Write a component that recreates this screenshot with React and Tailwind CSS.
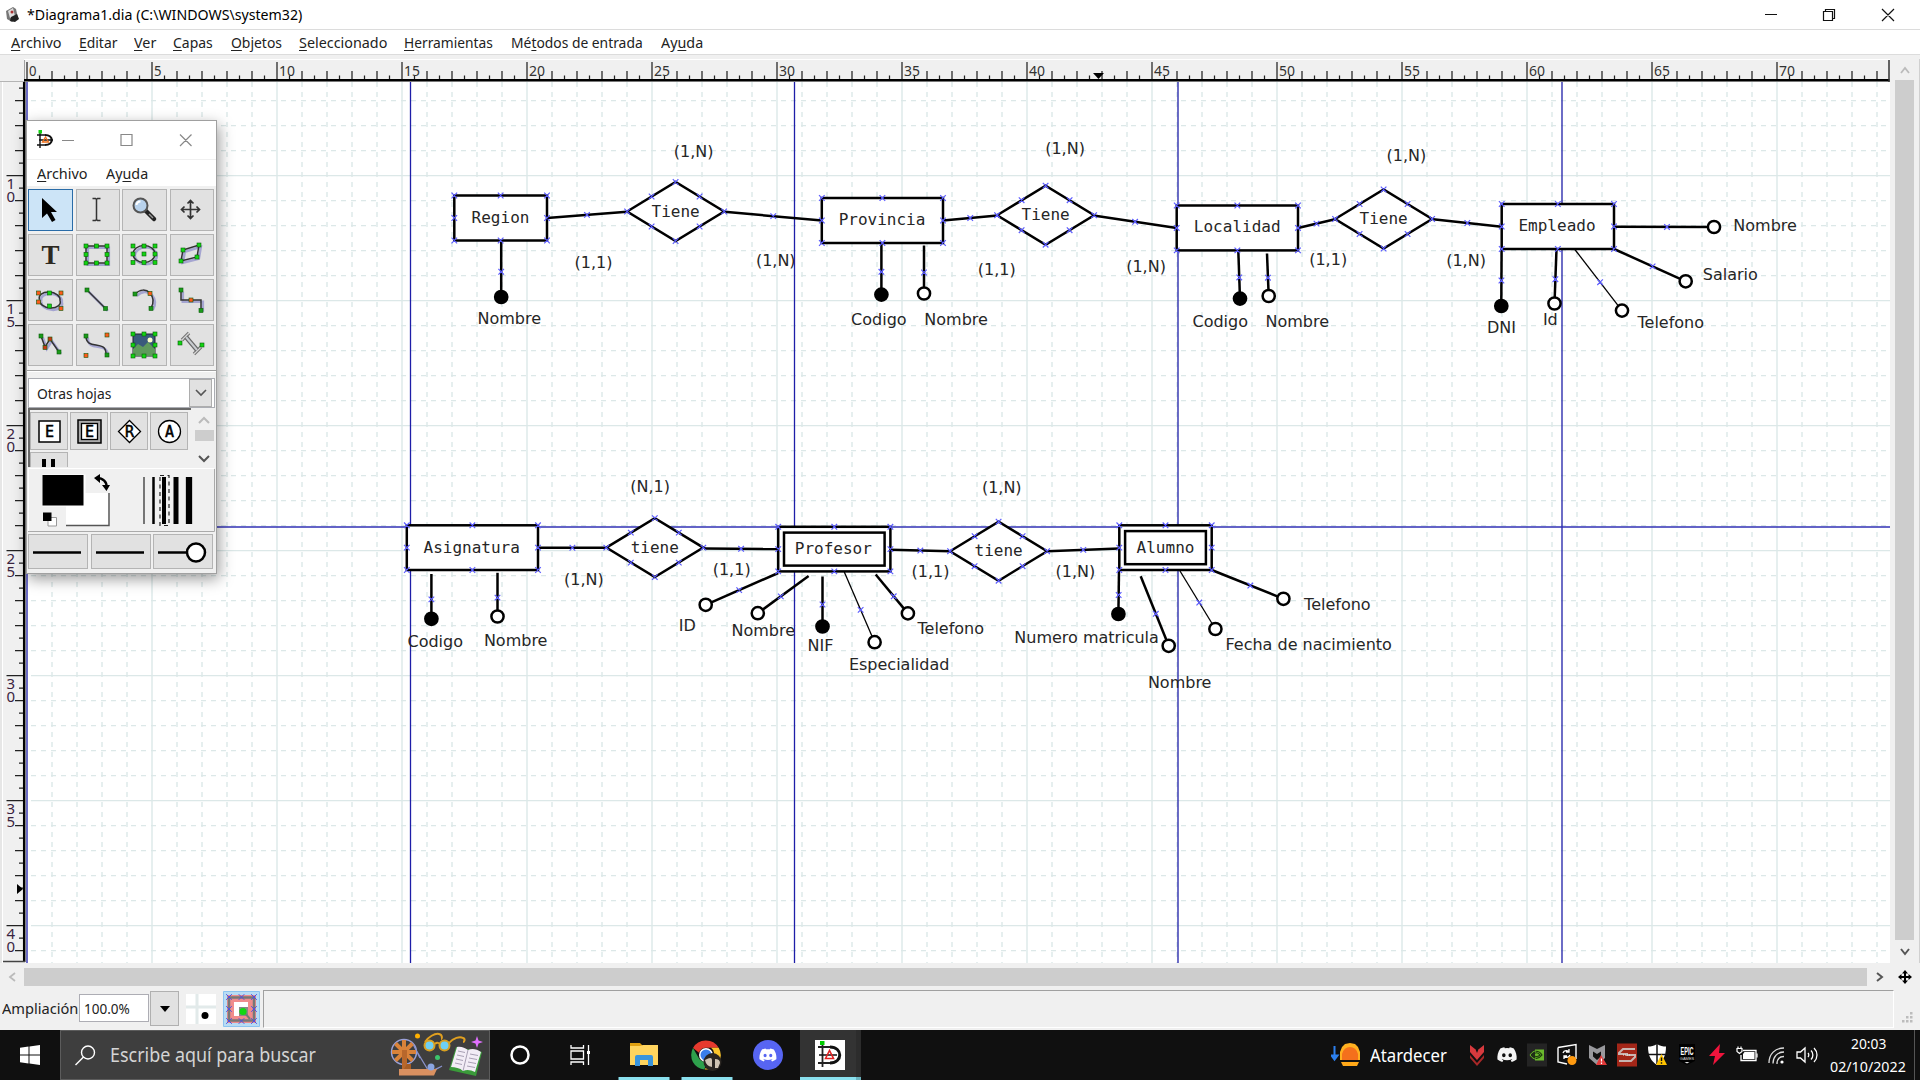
import React, { useLayoutEffect, useRef, useState } from "react";

/* Text squeezed or stretched to a given width */
function Fit({ w, className = "", children }) {
  const ref = useRef(null);
  const [scale, setScale] = useState(1);
  useLayoutEffect(() => {
    setScale(w / ref.current.offsetWidth);
  }, [w]);
  return (
    <span className={"inline-block shrink-0 whitespace-nowrap " + className} style={{ width: w }}>
      <span ref={ref} className="inline-block origin-left" style={{ transform: `scaleX(${scale})` }}>
        {children}
      </span>
    </span>
  );
}

const U = ({ children }) => <span className="underline decoration-1 underline-offset-2">{children}</span>;

const MENUS = [
  [["", "A", "rchivo"], 51, 17],
  [["", "E", "ditar"], 38, 17],
  [["", "V", "er"], 22, 17],
  [["", "C", "apas"], 40, 18],
  [["", "O", "bjetos"], 51, 17],
  [["", "S", "eleccionado"], 88, 17],
  [["", "H", "erramientas"], 89, 18],
  [["Mé", "t", "odos de entrada"], 132, 18],
  [["Ay", "u", "da"], 42, 0],
];

/* ---------- diagram data ---------- */
const ENTITIES = [
  { t: "Region", x: 454.3, y: 195.5, r: 547, b: 240.5, c: 500.5, base: 223 },
  { t: "Provincia", x: 821.8, y: 198, r: 943, b: 243, c: 882, base: 225 },
  { t: "Localidad", x: 1176.7, y: 205.5, r: 1298, b: 250.4, c: 1237.2, base: 232 },
  { t: "Empleado", x: 1501.7, y: 204, r: 1614, b: 249, c: 1557, base: 231.3 },
  { t: "Asignatura", x: 406.8, y: 525.3, r: 538, b: 570, c: 471.7, base: 552.7 },
  { t: "Profesor", x: 778.2, y: 526.8, r: 890.4, b: 571.4, c: 833.3, base: 553.6, weak: true },
  { t: "Alumno", x: 1119.3, y: 525.3, r: 1211.7, b: 570, c: 1165.5, base: 552.6, weak: true },
];
const RELATIONS = [
  { t: "Tiene", c: 675.6, y: 211.5 },
  { t: "Tiene", c: 1045.6, y: 215.2 },
  { t: "Tiene", c: 1383.6, y: 219 },
  { t: "tiene", c: 654.8, y: 547.6 },
  { t: "tiene", c: 998.6, y: 551.2 },
];
const LINKS = [
  [547, 218, 627, 211.8],
  [724.5, 211.8, 822, 220.5],
  [943, 220.5, 997.5, 215.6],
  [1093.5, 215.6, 1176.7, 228],
  [1298, 228, 1335, 219.2],
  [1433, 219.2, 1501.7, 226.8],
  [538, 547.7, 606.8, 547.8],
  [704, 548.6, 778.2, 549],
  [890.4, 549.8, 950.3, 551.3],
  [1047.3, 551.2, 1119.3, 548.5],
];
/* x1, y1, cx, cy, filled, thin */
const PINS = [
  [501.2, 240.5, 501.2, 297, 1, 0],
  [881.4, 243, 881.4, 294.6, 1, 0],
  [924, 245.5, 924, 293.5, 0, 0],
  [1238.3, 250.4, 1240, 298.6, 1, 0],
  [1267, 253.5, 1268.7, 296, 0, 0],
  [1501.6, 249, 1501.3, 306, 1, 0],
  [1556.5, 249, 1554.5, 303.5, 0, 0],
  [1574.5, 249, 1622, 310.6, 0, 1],
  [1614, 249, 1685.7, 281.3, 0, 0],
  [1614, 226.8, 1714, 227, 0, 0],
  [431.4, 574, 431.4, 618.8, 1, 0],
  [497.5, 572.8, 497.5, 616.5, 0, 0],
  [778.2, 573, 705.7, 604.8, 0, 0],
  [808.6, 576, 757.8, 613.2, 0, 0],
  [822.5, 576.5, 822.5, 626.5, 1, 0],
  [844.3, 572, 874.6, 642.2, 0, 1],
  [875.7, 574.5, 907.9, 613.4, 0, 0],
  [1119, 570, 1118.4, 614, 1, 0],
  [1140.7, 576.3, 1168.7, 645.8, 0, 0],
  [1180, 571, 1215.4, 629, 0, 1],
  [1211.7, 570, 1283.4, 598.8, 0, 0],
];
const LABELS = [
  ["(1,N)", 674.3, 157.3], ["(1,1)", 575, 268.4], ["(1,N)", 756.4, 266.2],
  ["Nombre", 478, 323.7], ["Codigo", 851.6, 325], ["Nombre", 924.8, 325],
  ["(1,N)", 1045.7, 154], ["(1,1)", 978.3, 275], ["(1,N)", 1126.7, 272.4],
  ["(1,1)", 1309.7, 265], ["(1,N)", 1387, 161.3], ["Codigo", 1193, 327.4],
  ["Nombre", 1266, 327.4], ["(1,N)", 1446.7, 266.2], ["DNI", 1487.4, 333.4],
  ["Id", 1543.4, 325], ["Telefono", 1638, 328.4], ["Salario", 1703.3, 280],
  ["Nombre", 1733.8, 231.2], ["(N,1)", 630.8, 492.4], ["(1,N)", 564.6, 584.8],
  ["(1,1)", 713.2, 575], ["(1,1)", 912.1, 577.4], ["(1,N)", 982.4, 493.2],
  ["(1,N)", 1056, 577.4], ["Codigo", 408, 647.4], ["Nombre", 484.4, 646.3],
  ["ID", 679.3, 631.3], ["Nombre", 732, 636.4], ["NIF", 808, 651.4],
  ["Especialidad", 849.4, 670], ["Telefono", 918, 633.6], ["Numero matricula", 1014.8, 642.6],
  ["Nombre", 1148.4, 687.6], ["Fecha de nacimiento", 1226, 650], ["Telefono", 1304.6, 609.8],
];

const cross = (x, y) => `M${x - 2.8} ${y - 2.8}l5.6 5.6M${x + 2.8} ${y - 2.8}l-5.6 5.6`;
const marks = [];
ENTITIES.forEach((e) => {
  const mx = (e.x + e.r) / 2;
  const my = (e.y + e.b) / 2;
  [[e.x, e.y], [mx, e.y], [e.r, e.y], [e.x, my], [e.r, my], [e.x, e.b], [mx, e.b], [e.r, e.b]].forEach((p) => marks.push(cross(p[0], p[1])));
});
RELATIONS.forEach((d) => {
  [[-48.5, 0], [48.5, 0], [0, -29.5], [0, 29.5], [-24, -15], [24, -15], [-24, 15], [24, 15]].forEach((p) => marks.push(cross(d.c + p[0], d.y + p[1])));
});
LINKS.forEach((l) => marks.push(cross((l[0] + l[2]) / 2, (l[1] + l[3]) / 2)));
PINS.forEach((p) => {
  const len = Math.hypot(p[2] - p[0], p[3] - p[1]);
  const k = (len + 6) / (2 * len);
  marks.push(cross(p[0] + (p[2] - p[0]) * k, p[1] + (p[3] - p[1]) * k));
});

const range = (a, b) => Array.from({ length: b - a + 1 }, (_, i) => a + i);

function Diagram() {
  return (
    <svg className="block" width="1864" height="881" viewBox="26 82 1864 881">
      <rect x="26" y="82" width="1864" height="881" fill="#fff" />
      {range(1, 74).map((i) => (
        <line key={i} x1={27 + i * 25} x2={27 + i * 25} y1="82" y2="963" stroke="#dce8e8" strokeWidth="1.4" strokeDasharray={i % 5 ? "5 5" : "none"} />
      ))}
      {range(1, 35).map((i) => (
        <line key={i} x1="31" x2="1890" y1={75.6 + i * 25} y2={75.6 + i * 25} stroke="#dce8e8" strokeWidth="1.4" strokeDasharray={(i + 1) % 5 ? "5 5" : "none"} />
      ))}
      {[27, 410.5, 794.5, 1178, 1562].map((x) => (
        <line key={x} x1={x} x2={x} y1="82" y2="963" stroke="#1e1ea8" strokeWidth="1.3" />
      ))}
      <line x1="26" x2="1890" y1="527" y2="527" stroke="#3030b4" strokeWidth="1.3" />

      <g stroke="#000" strokeWidth="2.5" fill="none">
        {LINKS.map((l, i) => <line key={i} x1={l[0]} y1={l[1]} x2={l[2]} y2={l[3]} />)}
      </g>
      <g stroke="#000">
        {PINS.map((p, i) => (
          <g key={i}>
            <line x1={p[0]} y1={p[1]} x2={p[2]} y2={p[3]} strokeWidth={p[5] ? 1.3 : 2.5} />
            <circle cx={p[2]} cy={p[3]} r="6.1" strokeWidth="2.5" fill={p[4] ? "#000" : "#fff"} />
          </g>
        ))}
      </g>
      <g stroke="#000" strokeWidth="2.5" fill="#fff">
        {ENTITIES.map((e) => (
          <g key={e.t}>
            <rect x={e.x} y={e.y} width={e.r - e.x} height={e.b - e.y} />
            {e.weak && <rect x={e.x + 5.8} y={e.y + 5.8} width={e.r - e.x - 11.6} height={e.b - e.y - 11.6} />}
          </g>
        ))}
        {RELATIONS.map((d, i) => (
          <path key={i} d={`M${d.c - 48.5} ${d.y}L${d.c} ${d.y - 29.5}L${d.c + 48.5} ${d.y}L${d.c} ${d.y + 29.5}Z`} />
        ))}
      </g>
      <path d={marks.join("")} stroke="#5c5cff" strokeWidth="1.2" fill="none" />
      <g fontSize="16" fill="#262626" textAnchor="middle" className="font-['DejaVu_Sans_Mono',monospace]">
        {ENTITIES.map((e) => <text key={e.t} x={e.c} y={e.base}>{e.t}</text>)}
        {RELATIONS.map((d, i) => <text key={i} x={d.c} y={d.y + 5}>{d.t}</text>)}
      </g>
      <g fontSize="16" fill="#262626" className="font-['DejaVu_Sans',sans-serif]">
        {LABELS.map((l, i) => <text key={i} x={l[1] - 0.5} y={l[2]}>{l[0]}</text>)}
      </g>
    </svg>
  );
}

function HRuler() {
  return (
    <svg className="block" width="1866" height="24" viewBox="24 59 1866 24">
      <rect x="24" y="59" width="1866" height="24" fill="#f0f0f0" />
      <path d="M24 59.5H1890" stroke="#fff" />
      <path d="M24.5 60V82" stroke="#a0a0a0" />
      <path d={range(0, 148).map((i) => `M${27 + i * 12.5} 80V${i % 10 === 0 ? 62 : i % 2 === 0 ? 71 : 75.5}`).join("")} stroke="#222" strokeWidth="1.25" />
      <path d="M24 80.2H1889.5" stroke="#000" strokeWidth="2.5" />
      <path d="M1889 60V82" stroke="#333" strokeWidth="1.5" />
      <path d="M1093 73h11l-5.5 6z" fill="#000" />
      <g fontSize="15" fill="#333" className="font-['Noto_Sans',sans-serif]">
        {range(0, 14).map((i) => (
          <text key={i} x={29 + i * 125} y="76" textLength={i < 2 ? 7.5 : 16} lengthAdjust="spacingAndGlyphs">{i * 5}</text>
        ))}
      </g>
    </svg>
  );
}

function VRuler() {
  return (
    <svg className="block" width="26" height="881" viewBox="0 82 26 881">
      <rect x="0" y="82" width="26" height="881" fill="#f0f0f0" />
      <path d="M1 82V963" stroke="#dcdcdc" />
      <path d="M2.5 82V963" stroke="#fff" />
      <path d={range(1, 70).map((i) => `M24 ${75.6 + i * 12.5}H${(i + 2) % 10 === 0 ? 6.5 : i % 2 === 0 ? 15 : 19}`).join("")} stroke="#222" strokeWidth="1.25" />
      <path d="M24.2 82V962" stroke="#000" strokeWidth="2.5" />
      <path d="M3 961.5H25" stroke="#444" strokeWidth="1.5" />
      <path d="M17 884v10l6-5z" fill="#000" />
      <g fontSize="15" fill="#3a2440" className="font-['Noto_Sans',sans-serif]">
        {range(0, 6).map((i) => {
          const s = String(10 + i * 5);
          return (
            <g key={s}>
              <text x="6.5" y={188.5 + i * 125}>{s[0]}</text>
              <text x="6.5" y={202 + i * 125}>{s[1]}</text>
            </g>
          );
        })}
      </g>
    </svg>
  );
}

/* ---------- toolbox ---------- */
const Hs = ({ pts, c = "#12d412" }) => pts.map((p, i) => <rect key={i} x={p[0] - 2} y={p[1] - 2} width="4" height="4" fill={c} stroke="#0a5a0a" strokeWidth="0.6" />);
const Sh = ({ d }) => (
  <>
    <path d={d} transform="translate(1.8 1.8)" stroke="#8484c8" strokeWidth="2.6" opacity="0.65" fill="none" />
    <path d={d} stroke="#333" strokeWidth="1.5" fill="none" />
  </>
);
const TOOLS = [
  <path d="M8 4v20l5-4.5 5 8.5 3.5-2-4.5-8H23z" fill="#000" />,
  <path d="M11.5 4.5h3l1 1 1-1h3M15.5 5.5v21M11.5 26.5h3l1-1 1 1h3" stroke="#333" strokeWidth="1.5" fill="none" />,
  <g><path d="M18 17l8 8" stroke="#222" strokeWidth="4.5" strokeLinecap="round" /><path d="M21 20l4 4" stroke="#999" strokeWidth="1.5" /><circle cx="12.5" cy="11.5" r="7" fill="#b8d2ec" stroke="#555" strokeWidth="2" /><path d="M8.500 11a4 4 0 014-3.5" stroke="#fff" strokeWidth="2" fill="none" /></g>,
  <path d="M15.5 7v17M7 15.5h17M12.5 9.500l3-3 3 3M12.5 21.5l3 3 3-3M9.500 12.5l-3 3 3 3M21.5 12.5l3 3-3 3" stroke="#333" strokeWidth="1.7" fill="none" />,
  <text x="16.5" y="25" fontSize="27" fontWeight="bold" textAnchor="middle" fill="#2c2820" className="font-['Liberation_Serif',serif]">T</text>,
  <g><Sh d="M5 7H26V24H5Z" /><Hs pts={[[5, 7], [15.5, 7], [26, 7], [5, 15.5], [26, 15.5], [5, 24], [15.5, 24], [26, 24]]} /></g>,
  <g><Sh d="M5 15a11 8.5 0 1022 0a11 8.5 0 10-22 0" /><Hs pts={[[5, 7], [16, 7], [27, 7], [5, 15], [16, 15], [27, 15], [5, 23.5], [16, 23.5], [27, 23.5]]} /></g>,
  <g><Sh d="M8 11L24 6L22 18L6 22Z" /><Hs pts={[[8, 11], [24, 6], [22, 18], [6, 22]]} /></g>,
  <g><Sh d="M5.5 15.500a10.500 6.700 8 1020.500 1a10.500 6.700 8 10-20.500-1" /><Hs pts={[[15.5, 9], [15.5, 22]]} /><Hs c="#ff5a1a" pts={[[4.5, 9], [4.5, 18], [27, 9], [27, 24.5]]} /></g>,
  <g><Sh d="M6 6L25 25" /><Hs c="#1a9a1a" pts={[[6, 6], [24.5, 24.5]]} /></g>,
  <g><Sh d="M7 10C12 5 18 5 22 9C26 14 26 19 23 24" /><Hs c="#1a9a1a" pts={[[7, 10], [23, 24.5]]} /><Hs c="#ff5a1a" pts={[[22, 9.5]]} /></g>,
  <g><Sh d="M6 6V16H26V26" /><Hs c="#1a9a1a" pts={[[6, 6], [26, 26.5]]} /><Hs c="#ff5a1a" pts={[[16, 16]]} /></g>,
  <g><Sh d="M7 7L11 18L16 10L25 23" /><Hs c="#1a9a1a" pts={[[7, 7], [25, 23]]} /><Hs c="#c83a14" pts={[[11, 18.5], [16, 10]]} /></g>,
  <g><Sh d="M5 7C5 22 25 10 25 25" /><Hs c="#1a9a1a" pts={[[5, 7], [26, 26]]} /><Hs c="#ff5a1a" pts={[[26, 6], [5, 26.5]]} /></g>,
  <g><rect x="5" y="5" width="22" height="22" fill="#3a5a7c" stroke="#223" /><path d="M5 20l5-5 5 3 5-5 7 7v7H5z" fill="#5f9a5c" /><circle cx="22" cy="11" r="2.5" fill="#ffffc8" /><Hs pts={[[5, 5], [16, 5], [27, 5], [5, 16], [27, 16], [5, 27], [16, 27], [27, 27]]} /></g>,
  <g>
    <path d="M7 11l7-7M19 25l7-7" stroke="#777" strokeWidth="3.500" />
    <path d="M7 11l7-7M19 25l7-7" stroke="#d6d6d6" strokeWidth="1.300" />
    <path d="M11 8l11 13" stroke="#666" strokeWidth="4.500" /><path d="M11 8l11 13" stroke="#c8ccd0" strokeWidth="2" />
    <Hs pts={[[5, 14], [27, 16]]} />
  </g>,
];

const SHAPES = [
  ["E", <rect x="6" y="6" width="21" height="21" fill="#fff" stroke="#000" strokeWidth="1.5" />],
  ["E", <g><rect x="5" y="5" width="23" height="23" fill="#aaa" stroke="#000" strokeWidth="1.5" /><rect x="8.5" y="8.5" width="16" height="16" fill="#fff" stroke="#000" strokeWidth="1.3" /></g>],
  ["R", <path d="M16.500 5.500L27.500 16.500L16.500 27.500L5.500 16.500Z" fill="#fff" stroke="#000" strokeWidth="1.3" />],
  ["A", <circle cx="16.5" cy="16.5" r="11" fill="#fff" stroke="#000" strokeWidth="1.3" />],
];

function Toolbox() {
  return (
    <div className="absolute top-[120px] left-[26px] flex h-[454px] w-[191px] flex-col border border-[#a0a0a0] bg-[#f0f0f0] shadow-[2px_5px_14px_rgba(0,0,0,0.4)]">
      <div className="flex h-[38px] shrink-0 items-center bg-white pl-[10px]">
        <svg width="18" height="20" viewBox="0 0 18 20" fill="none">
          <path d="M3 2v16M0 5h8M0 15h8M2 10h14" stroke="#111" strokeWidth="1.4" />
          <path d="M8 5c9 0 9 10 0 10" stroke="#111" strokeWidth="2.200" />
          <path d="M5.500 12l3-5 3 5z" stroke="#f0701a" strokeWidth="1.300" />
          <rect x="1.5" y="0" width="3.5" height="3.5" fill="#12d412" />
        </svg>
        <svg className="ml-[7px]" width="142" height="16" viewBox="0 0 142 16" stroke="#888" strokeWidth="1.2" fill="none">
          <path d="M0 8.500H12M59 2.500h11v11h-11zM118 2.500l11.500 11.5M129.500 2.500L118 14" />
        </svg>
      </div>
      <div className="mt-[1px] flex h-[26px] shrink-0 items-center bg-white pl-[10px] text-[15px] leading-none text-[#222]">
        <Fit w={51}><U>A</U>rchivo</Fit>
        <Fit w={42} className="ml-[18px]">Ay<U>u</U>da</Fit>
      </div>
      <div className="mt-[3px] grid shrink-0 grid-cols-[45px_44px_45px_44px] justify-start gap-x-[2.5px] gap-y-[3px] pl-[1px]">
        {TOOLS.map((t, i) => (
          <div key={i} className={"flex h-[42px] items-center justify-center border " + (i === 0 ? "border-[#2a6ca8] bg-[#cce4f7]" : "border-[#b4b4b4] bg-[#e1e1e1]")}>
            <svg className="mr-[1px] shrink-0" width="32" height="32" viewBox="0 0 32 32">{t}</svg>
          </div>
        ))}
      </div>
      <div className="mt-[4px] h-[2px] shrink-0 border-t border-[#a0a0a0] bg-white" />
      <div className="mx-[1px] mt-[6px] flex h-[30px] shrink-0 items-center border border-[#abadb3] bg-white pr-[2px] pl-[8px] text-[15px] leading-none text-[#222]">
        <Fit w={74}>Otras hojas</Fit>
        <div className="ml-auto flex h-[28px] w-[23px] items-center justify-center border border-[#adadad] bg-[#e1e1e1]">
          <svg width="12" height="8" viewBox="0 0 12 8"><path d="M1 1l5 5 5-5" stroke="#555" strokeWidth="1.6" fill="none" /></svg>
        </div>
      </div>
      <div className="ml-[1px] flex h-[59px] shrink-0">
        <div className="grid w-[163px] grid-cols-[38px_38px_38px_38px] content-start gap-x-[2px] gap-y-[2px] overflow-hidden border-t-2 border-l-2 border-[#696969] pt-[2px]">
          {SHAPES.map(([ch, s], i) => (
            <div key={i} className="flex h-[38px] items-center justify-center border border-[#b4b4b4] bg-[#e1e1e1]">
              <svg width="33" height="33" viewBox="0 0 33 33">
                {s}
                <text x="16.5" y="22" fontSize="15" textAnchor="middle" stroke="#000" strokeWidth="0.500" className="font-['DejaVu_Sans_Mono',monospace]">{ch}</text>
              </svg>
            </div>
          ))}
          <div className="flex h-[38px] justify-center border border-[#b4b4b4] bg-[#e1e1e1] pt-[6px]">
            <svg width="14" height="10"><path d="M0 0h4v10h-4zM9 0h4v10h-4z" /></svg>
          </div>
        </div>
        <div className="ml-[3px] flex w-[20px] flex-col items-center pt-[8px]">
          <svg width="12" height="8" viewBox="0 0 12 8"><path d="M1 7l5-5 5 5" stroke="#bbb" strokeWidth="2" fill="none" /></svg>
          <div className="mt-[6px] h-[11px] w-[19px] bg-[#cdcdcd]" />
          <svg className="mt-[14px]" width="12" height="8" viewBox="0 0 12 8"><path d="M1 1l5 5 5-5" stroke="#555" strokeWidth="2" fill="none" /></svg>
        </div>
      </div>
      <svg className="block shrink-0" width="189" height="65" viewBox="27 468 189 65">
        <path d="M28 469.500H214M28.500 470V533" stroke="#fff" />
        <path d="M28 532.500H214.500V470" stroke="#aaa" fill="none" />
        <path d="M66 494h44v33H66z" fill="#fff" />
        <path d="M66 526.500h43V494" stroke="#555" strokeWidth="1.5" fill="none" />
        <path d="M42.500 475.500h43v32h-43z" fill="#fff" />
        <path d="M42.500 476h41v30.500h-41z" />
        <path d="M48 518.500h8.500v8.500h-8.500z" fill="#fff" stroke="#999" />
        <path d="M43 513.500h8.500v8.500h-8.500z" />
        <path d="M97 479C103 479 107 483 106.500 488" stroke="#000" strokeWidth="2.4" fill="none" />
        <path d="M94 479l6-4v9zM102 486h8l-3.500 6z" />
        <path d="M144 478v47" stroke="#333" strokeWidth="1.3" />
        <path d="M153.500 478v47" stroke="#000" strokeWidth="2.5" />
        <path d="M164 478v47" stroke="#000" strokeWidth="4" />
        <path d="M176 478v47" stroke="#000" strokeWidth="5" />
        <path d="M189 478v47" stroke="#000" strokeWidth="6.3" />
        <path d="M160 476.500h9V526.500h-9z" stroke="#222" strokeWidth="1.2" strokeDasharray="4 3.5" fill="none" />
      </svg>
      <div className="mt-[2px] flex shrink-0 gap-[2.5px] pl-[1px]">
        {[0, 1, 2].map((i) => (
          <div key={i} className="flex h-[35px] w-[60px] items-center border border-[#b4b4b4] bg-[#e1e1e1]">
            <svg width="58" height="32" viewBox="0 0 58 32">
              <path d="M4 16.500H52" stroke="#000" strokeWidth="2.3" />
              {i === 2 && <path d="M50 14h6v5h-6z" fill="#e1e1e1" />}
              {i === 2 && <circle cx="42" cy="16.5" r="9" fill="#fff" stroke="#000" strokeWidth="2.5" />}
            </svg>
          </div>
        ))}
      </div>
    </div>
  );
}

/* ---------- taskbar ---------- */
const DISCORD = "M19.27 5.33C17.94 4.71 16.5 4.26 15 4a.09.09 0 0 0-.07.03c-.18.33-.39.76-.53 1.09a16.09 16.09 0 0 0-4.8 0c-.14-.34-.35-.76-.54-1.09c-.01-.02-.04-.03-.07-.03c-1.5.26-2.93.71-4.27 1.33c-.01 0-.02.01-.03.02c-2.72 4.07-3.47 8.03-3.1 11.95c0 .02.01.04.03.05c1.8 1.32 3.53 2.12 5.24 2.65c.03.01.06 0 .07-.02c.4-.55.76-1.13 1.07-1.74c.02-.04 0-.08-.04-.09c-.57-.22-1.11-.48-1.64-.78c-.04-.02-.04-.08-.01-.11c.11-.08.22-.17.33-.25c.02-.02.05-.02.07-.01c3.44 1.57 7.15 1.57 10.55 0c.02-.01.05-.01.07.01c.11.09.22.17.33.26c.04.03.04.09-.01.11c-.52.31-1.07.56-1.64.78c-.04.01-.05.06-.04.09c.32.61.68 1.19 1.07 1.74c.03.01.06.02.09.01c1.72-.53 3.45-1.33 5.25-2.65c.02-.01.03-.03.03-.05c.44-4.53-.73-8.46-3.1-11.95c-.01-.01-.02-.02-.04-.02zM8.52 14.91c-1.03 0-1.89-.95-1.89-2.12s.84-2.12 1.89-2.12c1.06 0 1.9.96 1.89 2.12c0 1.17-.84 2.12-1.89 2.12zm6.97 0c-1.03 0-1.89-.95-1.89-2.12s.84-2.12 1.89-2.12c1.06 0 1.9.96 1.89 2.12c0 1.17-.83 2.12-1.89 2.12z";

function SearchArt() {
  return (
    <svg width="94" height="46" viewBox="389 1032 94 46" fill="none">
      <circle cx="404" cy="1052" r="12.5" stroke="#9aa0d8" strokeWidth="1.5" />
      <path d="M416 1050l12 20c2 3 6 0 14-4M412 1042l8 16" stroke="#8a92cc" strokeWidth="1.3" />
      <g stroke="#d9823a" strokeWidth="4"><path d="M404 1040v24M392 1052h24M395.500 1043.500l17 17M412.500 1043.500l-17 17" /></g>
      <path d="M402 1050h5v21h-5z" fill="#b8672c" />
      <path d="M399 1069h38l-3 6.500h-35z" fill="#d99060" />
      <path d="M404 1069l3-5h4v5z" fill="#a65c24" />
      <circle cx="431" cy="1067" r="3.5" fill="#8ba4e0" />
      <path d="M425 1042c3-5 10-9 14-8s3 5 2 5M449 1043c4-5 11-7 14-5 3 1 1 4 0 4M435 1044c2-2 4-1 5 0" stroke="#e0a020" strokeWidth="2" />
      <circle cx="429.5" cy="1045.5" r="5" fill="#6ed0f4" stroke="#d9a020" strokeWidth="2" />
      <circle cx="444.5" cy="1045.5" r="5" fill="#6ed0f4" stroke="#d9a020" strokeWidth="2" />
      <circle cx="417.5" cy="1036" r="2.5" fill="#ffb000" />
      <circle cx="437.5" cy="1057.5" r="2.5" fill="#3cc46c" />
      <path d="M477 1036l1.500 4.500 4.500 1.500-4.500 1.500-1.500 4.500-1.500-4.500-4.500-1.500 4.500-1.500z" fill="#e070ff" />
      <path d="M449 1070l7-23 26 5-6 24z" fill="#3a9a3a" />
      <path d="M451 1067l6-20c4-1 8 1 11 3 4-2 9-1 13 2l-6 20c-4-2-8-3-12-1-3-3-8-4-12-4z" fill="#f2ecf6" />
      <path d="M468 1050l-5 21M458 1051l7 1.500M457 1055l7 1.500M456 1059l7 1.500M455 1063l7 1.500M470 1054l8 1.500M469 1058l8 1.500M468 1062l8 1.500M467 1066l8 1.500" stroke="#a8a0b4" strokeWidth="1" />
    </svg>
  );
}

function TaskIcon({ w, bar, children }) {
  return (
    <div className={"relative flex h-[50px] shrink-0 items-center justify-center " + w}>
      {children}
      {bar && <div className="absolute bottom-0 left-1/2 h-[3px] w-[51px] -translate-x-1/2 bg-[#8ae0ee]" />}
    </div>
  );
}

const TRAY = [
  <g><path d="M3 0l5 4h4l5-4v7l-7 8-7-8z" fill="#d83a3e" /><path d="M8 3h4l-2 5z" fill="#101010" /><path d="M3 10l7 8 7-8v3l-7 8-7-8z" fill="#a82828" /></g>,
  <path d={DISCORD} fill="#f4f4f4" transform="translate(-1 -1.5) scale(0.92)" />,
  <g><rect width="20" height="23" y="-1.5" fill="#242424" /><path d="M8 4.500h9v11H8z" fill="#6ab82c" /><path d="M3 10c3-5 9-5 12 0-3 4-8 5-12 0zM6 10c2-3 5-3 7 0-2 2-5 2-7 0z" stroke="#1c3a0c" fill="none" strokeWidth="1.2" /><path d="M3 10c2-3 4-4 6-4M3 10c2 3 4 4 6 4" stroke="#6ab82c" fill="none" /></g>,
  <g><path d="M1 2.500L19-.5V14M1 2.500V17l9 2" stroke="#fff" strokeWidth="1.4" fill="none" /><path d="M6 8c1-3 5-3 6-1M13 10c-1 3-5 3-6 1M12 4v3h-3M7 14v-3h3" stroke="#fff" strokeWidth="1.3" fill="none" /><circle cx="15" cy="15.5" r="4.5" fill="#ff9a10" /></g>,
  <g><path d="M2 0l8 4 8-4v13l-8 7-8-7zM6 6.500v5l4 3.500 4-3.500v-5l-4 2.500z" fill="#98989c" fillRule="evenodd" /><path d="M14 10l6 10H9z" fill="#e23a3a" /><path d="M14.500 13.500v3M14.500 17.500v1.500" stroke="#fff" strokeWidth="1.2" /></g>,
  <g><rect width="20" height="23" y="-1.5" fill="#a32618" /><path d="M18 4H6L2 8v1h9M2 16h12l4-4v-2H9" stroke="#c8b4b0" strokeWidth="2" fill="none" /><path d="M6 10h8" stroke="#eee" strokeWidth="1" strokeDasharray="1 1" /></g>,
  <g><path d="M10-1c3 2 6 2.500 9 2.500C19 11 16 16 10 20 4 16 1 11 1 1.500 4 1.500 7 1 10-1z" fill="#fff" /><path d="M10-1v20M1 9.500h17" stroke="#111" strokeWidth="1.5" /><path d="M14.500 9l5.500 11H9z" fill="#ffc400" /><path d="M14.500 12.500v3.500M14.500 17.300v1.500" stroke="#111" strokeWidth="1.4" /></g>,
  <g><path d="M2-1h16v17l-8 4-8-4z" fill="#000" /><text x="10" y="9.500" fontSize="11" fontWeight="bold" fill="#fff" textAnchor="middle" textLength="13" lengthAdjust="spacingAndGlyphs" className="font-['Liberation_Sans',sans-serif]">EPIC</text><text x="10" y="15" fontSize="4" fill="#ddd" textAnchor="middle" className="font-['Liberation_Sans',sans-serif]">GAMES</text><path d="M7.500 17h5l-2.500 1.500z" fill="#ddd" /></g>,
  <path d="M13-1L2 11h6l-2 9L18 8h-6z" fill="#f0143c" />,
  <g stroke="#fff" strokeWidth="1.3" fill="none"><path d="M6 5.500H19V15.500H4V10" /><path d="M7.500 7h10v7h-11.500v-5z" fill="#fff" stroke="none" /><path d="M20 8.500v4M0 3.500h5v3l-2.500 2-2.500-2zM1 1.500v2M4 1.500v2" strokeWidth="1.2" /></g>,
  <g stroke="#ddd" strokeWidth="1.3" fill="none"><path d="M2 18C2 9 8 3 17 3M6 18.500C6 12 10 7 17 7M10 19C10 15 12 11.500 17 11.5" /><circle cx="15" cy="17" r="1.6" fill="#fff" stroke="none" /></g>,
  <g stroke="#fff" strokeWidth="1.3" fill="none"><path d="M0 7h3.500L8 3v14l-4.500-4H0z" /><path d="M11 8c1 1 1 3 0 4M14 5.500c2.500 2.500 2.500 6.500 0 9M17 3c4 4 4 10 0 14" /></g>,
];

function Taskbar() {
  return (
    <div className="flex h-[50px] shrink-0 items-center bg-[#101010] text-white">
      <div className="flex w-[60px] shrink-0 justify-center">
        <svg width="20" height="20" viewBox="0 0 20 20" fill="#fff"><path d="M0 2.700L8.500 1.500V9.500H0zM9.500 1.400L20 0V9.500H9.500zM0 10.500H8.500V18.500L0 17.300zM9.500 10.500H20V20L9.500 18.600z" /></svg>
      </div>
      <div className="flex h-[50px] w-[430px] shrink-0 items-center border border-[#5c5c5c] bg-[#3e3e3e] pl-[14px]">
        <svg width="21" height="21" viewBox="0 0 21 21" fill="none" stroke="#fff" strokeWidth="1.4"><circle cx="13" cy="7.5" r="6.5" /><path d="M8.500 12L.5 20" /></svg>
        <Fit w={206} className="ml-[14px] text-[20px] text-[#d4d4d4]">Escribe aquí para buscar</Fit>
        <div className="ml-[73px]"><SearchArt /></div>
      </div>
      <TaskIcon w="w-[60px]"><svg width="22" height="22"><circle cx="11" cy="11" r="8.5" fill="none" stroke="#fff" strokeWidth="2.5" /></svg></TaskIcon>
      <TaskIcon w="w-[60px]">
        <svg width="21" height="20" viewBox="0 0 21 20" fill="none" stroke="#fff" strokeWidth="1.3"><path d="M1 0v3h12.500V0M1 20v-3h12.500v3M1 6h12.500v8H1zM18.500 0v20" /><path d="M17 6h3v3h-3z" fill="#fff" stroke="none" /></svg>
      </TaskIcon>
      <TaskIcon w="w-[68px]" bar>
        <svg width="28" height="24" viewBox="0 0 28 24"><path d="M0 0h10l3 3v4H0z" fill="#e0a010" /><path d="M0 3h10l3-1h15v20H0z" fill="#ffd45e" /><path d="M5 23V14q0-2 2-2h14q2 0 2 2v9h-5v-6h-8v6z" fill="#3a94dc" /></svg>
      </TaskIcon>
      <TaskIcon w="w-[57px]" bar>
        <svg width="31" height="31" viewBox="0 0 31 31">
          <path d="M15 0.500a14.500 14.500 0 0112.600 7.300H15a7.300 7.300 0 00-7 5L2 8A14.500 14.500 0 0115 .5z" fill="#e63a2e" />
          <path d="M2 8l6.300 11A7.300 7.300 0 0015 22l-1.500 7.500A14.500 14.500 0 012 8z" fill="#2ea04c" />
          <path d="M27.700 7.800a14.500 14.500 0 01-14 21.700L21 19a7.300 7.300 0 00-1-11.200z" fill="#fbc52c" />
          <circle cx="15" cy="15" r="7" fill="#fff" /><circle cx="15" cy="15" r="5.5" fill="#3a7eea" />
          <circle cx="21.5" cy="22" r="9" fill="#2a2622" /><path d="M14 20q7-4 7 0v7q-6-1-7-7zM24 19q5 0 5 4l-2 5h-3z" fill="#cfc4b4" />
        </svg>
      </TaskIcon>
      <TaskIcon w="w-[65px]">
        <svg width="30" height="30" viewBox="0 0 30 30"><circle cx="15" cy="15" r="15" fill="#5765f2" /><path d={DISCORD} fill="#fff" transform="translate(5.2 5.2) scale(0.81)" /></svg>
      </TaskIcon>
      <div className="flex h-[50px] w-[61px] shrink-0">
        <div className="flex w-[56px] flex-col items-center bg-[#333] pt-[10px]">
          <svg className="ml-[4px] bg-white" width="30" height="30" viewBox="0 0 30 30" fill="none">
            <path d="M7.500 4v23M3 7h13M3 23h13" stroke="#222" strokeWidth="1.8" />
            <path d="M15 7c13 0 13 16 0 16" stroke="#111" strokeWidth="3" />
            <path d="M4 15h18" stroke="#111" strokeWidth="1.5" />
            <path d="M10.500 18.500l4-8 4 8z" stroke="#e02020" strokeWidth="1.6" />
            <rect x="5" y="1" width="4.5" height="4" fill="#0c0" />
          </svg>
          <div className="mt-auto h-[3px] w-full bg-[#8ae0ee]" />
        </div>
        <div className="flex w-[5px] flex-col justify-end bg-[#2c2c2c]"><div className="h-[3px] bg-[#6ab4c0]" /></div>
      </div>
      <div className="ml-[470px] flex shrink-0 items-center">
        <svg width="29" height="24" viewBox="0 0 29 24"><path d="M3.500 3v12M0.500 12.500l3 4 3-4z" stroke="#2c80f0" strokeWidth="2" fill="#2c80f0" /><path d="M9 17V9l2-5 3-3 5-1 5 1 3 3 2 5v8z" fill="#ffb020" /><path d="M11 17v-6q2-7 8-7t8 7v6z" fill="#f4701c" /><path d="M10 19h18l-2 4H12z" fill="#ffa818" /></svg>
        <Fit w={77} className="ml-[10px] text-[18.5px]">Atardecer</Fit>
      </div>
      <div className="ml-[20px] flex shrink-0 gap-[10px]">
        {TRAY.map((t, i) => <svg key={i} className="overflow-visible" width="20" height="20" viewBox="0 0 20 20">{t}</svg>)}
      </div>
      <div className="ml-[13px] flex h-[50px] w-[76px] shrink-0 flex-col items-center justify-between pt-[2px] pb-[3px] text-[15px] leading-[22px]">
        <Fit w={35}>20:03</Fit>
        <Fit w={76}>02/10/2022</Fit>
      </div>
      <div className="ml-[8px] h-[50px] w-px bg-[#555]" />
    </div>
  );
}

function StatusBar() {
  return (
    <div className="flex h-[43px] shrink-0 items-start bg-[#f0f0f0] pt-[3px] pl-[2px] text-[15px] leading-none text-[#222]">
      <Fit w={76} className="mt-[11px]">Ampliación</Fit>
      <div className="mt-[4px] ml-[1px] flex h-[28px] w-[70px] shrink-0 items-center border border-[#adadb4] bg-white pl-[4px]"><Fit w={46}>100.0%</Fit></div>
      <div className="mt-[1px] ml-[1px] flex h-[35px] w-[29px] shrink-0 items-center justify-center border border-[#b0b0b0] bg-[#e1e1e1]">
        <svg width="10" height="6"><path d="M0 0h10l-5 6z" /></svg>
      </div>
      <svg className="mt-[4px] ml-[7px] shrink-0" width="30" height="30"><path d="M0 0h30v30H0z" fill="#fff" /><path d="M11 0v30M0 13h30" stroke="#e2eaea" strokeWidth="3" /><circle cx="19" cy="21.5" r="3.5" /></svg>
      <svg className="ml-[7px] shrink-0" width="37" height="37" viewBox="0 -1 37 37">
        <path d="M.5.5h36v35H.5z" fill="#b8dcf4" stroke="#8cc4f0" />
        <path d="M4 4h29v28H4z" fill="#f08c8c" />
        <path d="M6 6.500h25v23H6z" fill="none" stroke="#777" strokeWidth="2.5" />
        <path d="M11 11h14v14H11z" fill="#fff" /><path d="M16 16h9v9h-9z" fill="#888" />
        <path d="M22 22l5 6" stroke="#777" strokeWidth="2" />
        <circle cx="20" cy="20.5" r="3.6" fill="#12d812" />
        <path d={[[6, 6], [18.5, 6], [31, 6], [6, 18], [31, 18], [6, 30], [18.5, 30], [31, 30]].map((p) => cross(p[0], p[1])).join("")} stroke="#5050e0" />
      </svg>
      <div className="ml-[3px] h-[38px] w-[1631px] shrink-0 border-t border-r border-b border-l border-t-[#a0a0a0] border-r-white border-b-white border-l-[#a0a0a0]" />
      <svg className="mt-[22px] ml-[8px]" width="12" height="12" fill="#bcbcbc"><path d="M8 0h2.500v2.500h-2.500zM4 4h2.500v2.500h-2.500zM8 4h2.500v2.500h-2.500zM0 8h2.500v2.500h-2.500zM4 8h2.500v2.500h-2.500zM8 8h2.500v2.500h-2.500z" /></svg>
    </div>
  );
}

export default function App() {
  return (
    <div className="relative flex h-[1080px] w-[1920px] flex-col overflow-hidden bg-[#f0f0f0] font-['Noto_Sans','Open_Sans',sans-serif]">
      <div className="flex h-[29px] shrink-0 items-center bg-white pl-[6px] text-[15px] leading-none text-black">
        <svg width="14" height="15" viewBox="0 0 14 15"><path d="M0 4l7-4 3 2 2 9-6 4-5-3z" fill="#777" /><path d="M2 4l5-3 2 8-5 2z" fill="#ddd" /><path d="M5 10l6-3 2 5-4 3-5-1z" fill="#222" /><circle cx="6" cy="5" r="1.5" fill="#a33" /></svg>
        <Fit w={275} className="ml-[7px]">*Diagrama1.dia (C:\WINDOWS\system32)</Fit>
        <svg className="ml-auto mr-[25px]" width="132" height="16" viewBox="0 0 132 16" fill="none" stroke="#111" strokeWidth="1.2">
          <path d="M2 7.500H14M60.500 4.500h9v9h-9zM62.500 4.500V2.500h9v9h-2M119 2l12 12M131 2l-12 12" />
        </svg>
      </div>
      <div className="flex h-[26px] shrink-0 items-center border-y border-[#dcdcdc] bg-white pl-[10.5px] text-[15px] leading-none text-[#222]">
        {MENUS.map(([p, w, gap], i) => (
          <div key={i} className="flex shrink-0">
            <Fit w={w}>{p[0]}<U>{p[1]}</U>{p[2]}</Fit>
            <div className="shrink-0" style={{ width: gap }} />
          </div>
        ))}
      </div>
      <div className="flex h-[908px] shrink-0 pt-[4px]">
        <div className="flex w-[1890px] shrink-0 flex-col">
          <div className="flex h-[23px] shrink-0">
            <div className="w-[24px] border-b border-[#b4b4b4]" />
            <HRuler />
          </div>
          <div className="flex h-[881px] shrink-0">
            <VRuler />
            <Diagram />
          </div>
        </div>
        <div className="ml-[5px] flex w-[19px] flex-col items-center pt-[7px]">
          <svg width="10" height="8" viewBox="0 0 10 8"><path d="M1 7l4-5 4 5" stroke="#bbb" strokeWidth="1.8" fill="none" /></svg>
          <div className="mt-[6px] h-[860px] w-[19px] bg-[#cdcdcd]" />
          <svg className="mt-[8px]" width="10" height="8" viewBox="0 0 10 8"><path d="M1 1l4 5 4-5" stroke="#555" strokeWidth="2" fill="none" /></svg>
        </div>
        <div className="ml-auto w-px bg-[#d0d0d0]" />
      </div>
      <div className="flex h-[24px] shrink-0 items-center pt-[4px] pl-[8px]">
        <svg width="8" height="10" viewBox="0 0 8 10"><path d="M7 1L2 5l5 4" stroke="#bbb" strokeWidth="1.8" fill="none" /></svg>
        <div className="ml-[8px] h-[18px] w-[1843px] bg-[#cdcdcd]" />
        <svg className="ml-[9px]" width="8" height="10" viewBox="0 0 8 10"><path d="M1 1l5 4-5 4" stroke="#555" strokeWidth="2" fill="none" /></svg>
        <svg className="ml-[14px]" width="14" height="14" viewBox="0 0 14 14"><path d="M7 1v12M1 7h12" stroke="#000" strokeWidth="2" /><path d="M7 0l3 3.500H4zM7 14l3-3.500H4zM0 7l3.500-3v6zM14 7l-3.500-3v6z" /></svg>
      </div>
      <StatusBar />
      <Taskbar />
      <Toolbox />
    </div>
  );
}
